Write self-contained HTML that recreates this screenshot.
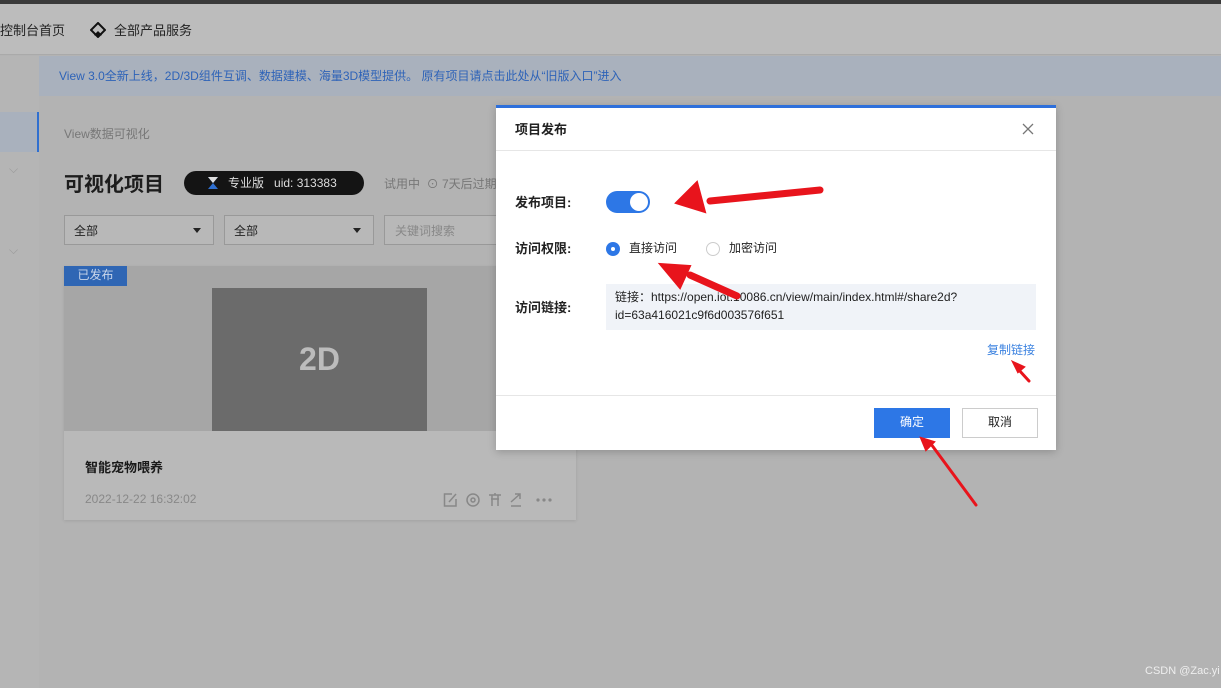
<!DOCTYPE html>
<html><head><meta charset="utf-8"><style>
*{margin:0;padding:0;box-sizing:border-box}
body{width:1221px;height:688px;overflow:hidden;background:#b3b3b3;font-family:"Liberation Sans","Noto Sans CJK SC",sans-serif;position:relative;font-size:12px;color:#222}
.a{position:absolute}
</style></head><body>
<div class="a" style="left:0;top:0;width:1221px;height:4px;background:#3a3a3a"></div>
<div class="a" style="left:0;top:4px;width:1221px;height:51px;background:#bcbcbc;border-bottom:1px solid #aaa"></div>
<div class="a" style="left:0;top:20px;font-size:13px;color:#222">控制台首页</div>
<svg class="a" style="left:90px;top:22px" width="16" height="16" viewBox="0 0 16 16"><path d="M8 1L15 8L8 15L1 8Z" fill="none" stroke="#111" stroke-width="2"/><path d="M8 9L12 13L8 15L4 13Z" fill="#111"/></svg>
<div class="a" style="left:114px;top:20px;font-size:13px;color:#222">全部产品服务</div>
<div class="a" style="left:0;top:56px;width:39px;height:632px;background:#b5b5b5"></div>
<div class="a" style="left:0;top:112px;width:39px;height:40px;background:#a9b1bd;border-right:2px solid #2f6fd0"></div>
<div class="a" style="left:9px;top:162px;color:#999;font-size:12px">⌵</div>
<div class="a" style="left:9px;top:243px;color:#999;font-size:12px">⌵</div>
<div class="a" style="left:39px;top:56px;width:1182px;height:40px;background:#a9b1bd"></div>
<div class="a" style="left:59px;top:67px;color:#2e63b8;font-size:12px">View 3.0全新上线，2D/3D组件互调、数据建模、海量3D模型提供。 原有项目请点击此处从“旧版入口”进入</div>
<div class="a" style="left:64px;top:125px;color:#777;font-size:12px">View数据可视化</div>
<div class="a" style="left:64px;top:168px;font-size:20px;font-weight:bold;color:#1d1d1d">可视化项目</div>
<div class="a" style="left:184px;top:171px;width:180px;height:24px;border-radius:12px;background:#141414;color:#ddd;font-size:12px;line-height:24px;padding-left:24px">
<svg style="position:absolute;left:24px;top:6px" width="10" height="12" viewBox="0 0 10 12"><path d="M0 0H10L5 6L10 12H0L5 6Z" fill="#2f6fd0"/><path d="M0 0H10L5 6Z" fill="#ddd"/></svg>
<span style="margin-left:20px">专业版</span><span style="margin-left:10px">uid: 313383</span></div>
<div class="a" style="left:384px;top:175px;color:#777">试用中 &nbsp;⊙ 7天后过期</div>
<div class="a" style="left:64px;top:215px;width:150px;height:30px;border:1px solid #999;background:#b8b8b8;padding:6px 9px;font-size:12px">全部<svg style="position:absolute;right:12px;top:12px" width="8" height="5"><path d="M0 0H8L4 5Z" fill="#222"/></svg></div>
<div class="a" style="left:224px;top:215px;width:150px;height:30px;border:1px solid #999;background:#b8b8b8;padding:6px 9px;font-size:12px">全部<svg style="position:absolute;right:12px;top:12px" width="8" height="5"><path d="M0 0H8L4 5Z" fill="#222"/></svg></div>
<div class="a" style="left:384px;top:215px;width:120px;height:30px;border:1px solid #999;background:#b8b8b8;padding:6px 10px;font-size:12px;color:#888">关键词搜索</div>
<div class="a" style="left:64px;top:266px;width:512px;height:254px;background:#b9b9b9;box-shadow:0 1px 3px rgba(0,0,0,.1)"></div>
<div class="a" style="left:64px;top:266px;width:512px;height:165px;background:#a6a6a6"></div>
<div class="a" style="left:64px;top:266px;width:63px;height:20px;background:#2f66b4;color:#c9d6ea;font-size:12px;line-height:19px;text-align:center">已发布</div>
<div class="a" style="left:212px;top:288px;width:215px;height:143px;background:#6b6b6b;color:#bcbcbc;font-size:32px;font-weight:bold;text-align:center;line-height:143px">2D</div>
<div class="a" style="left:85px;top:457px;font-size:13px;font-weight:bold;color:#1a1a1a">智能宠物喂养</div>
<div class="a" style="left:85px;top:492px;color:#888;font-size:12px">2022-12-22 16:32:02</div>
<svg class="a" style="left:443px;top:492px" width="112" height="16" viewBox="0 0 112 16" fill="none" stroke="#888" stroke-width="1.5">
<path d="M9 2H1.5V14H13V7"/><path d="M6 10L13 2"/>
<circle cx="30" cy="8" r="6"/><circle cx="30" cy="8" r="2"/>
<path d="M46 3H58M49 3V14M55 3V14M48 7H56M52 1V3"/>
<path d="M68 10L77 2M72 2H77V7M68 14H78"/>
<g fill="#888" stroke="none"><circle cx="95" cy="8" r="1.6"/><circle cx="101" cy="8" r="1.6"/><circle cx="107" cy="8" r="1.6"/></g>
</svg>

<div class="a" style="left:496px;top:105px;width:560px;height:345px;background:#fff;border-top:3px solid #2d6fdb;box-shadow:0 2px 8px rgba(0,0,0,.2)"></div>
<div class="a" style="left:515px;top:119px;font-size:13px;font-weight:bold;color:#222">项目发布</div>
<svg class="a" style="left:1022px;top:123px" width="12" height="12"><path d="M1 1L11 11M11 1L1 11" stroke="#777" stroke-width="1.3"/></svg>
<div class="a" style="left:496px;top:150px;width:560px;height:1px;background:#e6e6e6"></div>
<div class="a" style="left:515px;top:192px;font-size:13px;font-weight:bold">发布项目:</div>
<div class="a" style="left:606px;top:191px;width:44px;height:22px;border-radius:11px;background:#2d77e6"><div style="position:absolute;right:2px;top:2px;width:18px;height:18px;border-radius:9px;background:#fff"></div></div>
<div class="a" style="left:515px;top:238px;font-size:13px;font-weight:bold">访问权限:</div>
<div class="a" style="left:606px;top:242px;width:14px;height:14px;border-radius:7px;background:#2d77e6"><div style="position:absolute;left:5px;top:5px;width:4px;height:4px;border-radius:2px;background:#fff"></div></div>
<div class="a" style="left:629px;top:239px;font-size:12px">直接访问</div>
<div class="a" style="left:706px;top:242px;width:14px;height:14px;border-radius:7px;border:1px solid #ccc"></div>
<div class="a" style="left:729px;top:239px;font-size:12px">加密访问</div>
<div class="a" style="left:515px;top:297px;font-size:13px;font-weight:bold">访问链接:</div>
<div class="a" style="left:606px;top:284px;width:430px;height:46px;background:#f0f3f8;padding:4px 9px;font-size:12px;line-height:18px;color:#222">链接：https://open.iot.10086.cn/view/main/index.html#/share2d?<br>id=63a416021c9f6d003576f651</div>
<div class="a" style="left:987px;top:341px;font-size:12px;color:#3b82e0">复制链接</div>
<div class="a" style="left:496px;top:395px;width:560px;height:1px;background:#e6e6e6"></div>
<div class="a" style="left:874px;top:408px;width:76px;height:30px;background:#2d77e6;color:#fff;font-size:12px;text-align:center;line-height:28px">确定</div>
<div class="a" style="left:962px;top:408px;width:76px;height:30px;border:1px solid #ccc;background:#fff;font-size:12px;text-align:center;line-height:26px">取消</div>

<svg class="a" style="left:0;top:0" width="1221" height="688">
<g fill="#e8141c" stroke="#e8141c" stroke-linecap="round">
<path d="M820 190L710 201" stroke-width="7"/><path d="M676 203L697 182L705 212Z" stroke-width="2"/>
<path d="M737 296L690 275" stroke-width="7"/><path d="M660 264L690 266L680 288Z" stroke-width="2"/>
<path d="M1029 381L1018 369" stroke-width="3"/><path d="M1013 362L1024 367L1018 372Z" stroke-width="2"/>
<path d="M976 505L931 444" stroke-width="3"/><path d="M921 438L934 442L926 450Z" stroke-width="2"/>
</g></svg>
<div class="a" style="left:1145px;top:665px;font-size:11px;color:#eee">CSDN @Zac.yi</div>
</body></html>
